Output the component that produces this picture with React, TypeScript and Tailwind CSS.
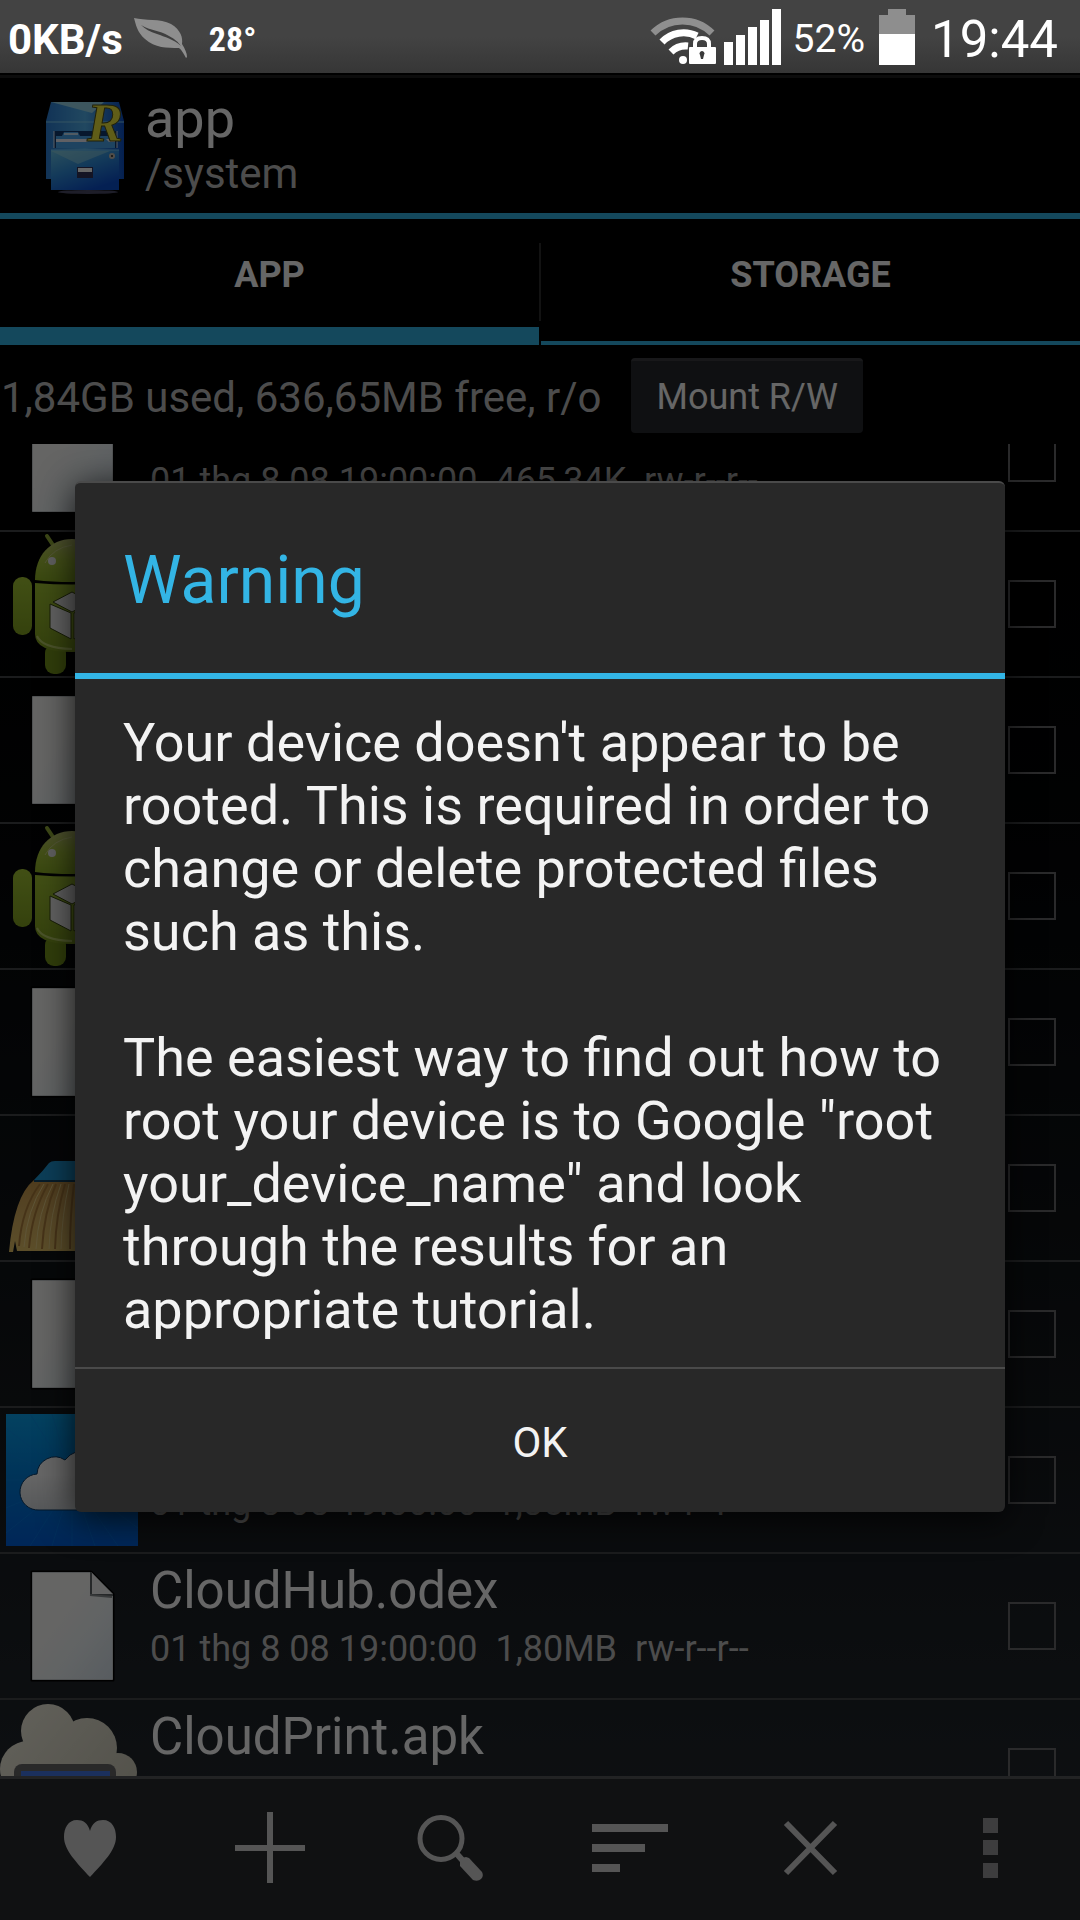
import React, { useState } from 'react';

type IconKind = 'file' | 'android' | 'broom' | 'cloudhub' | 'cloudprint';

interface FileEntry {
  name: string;
  date: string;
  size: string;
  perms: string;
  icon: IconKind;
}

const DATE = '01 thg 8 08 19:00:00';

const FILES: FileEntry[] = [
  { name: 'Chrome.odex', date: DATE, size: '465,34K', perms: 'rw-r--r--', icon: 'file' },
  { name: 'Bonjour.apk', date: DATE, size: '22,10K', perms: 'rw-r--r--', icon: 'android' },
  { name: 'Bonjour.odex', date: DATE, size: '18,42K', perms: 'rw-r--r--', icon: 'file' },
  { name: 'CertInst.apk', date: DATE, size: '96,71K', perms: 'rw-r--r--', icon: 'android' },
  { name: 'CertInst.odex', date: DATE, size: '61,08K', perms: 'rw-r--r--', icon: 'file' },
  { name: 'Cleaner.apk', date: DATE, size: '1,12MB', perms: 'rw-r--r--', icon: 'broom' },
  { name: 'Cleaner.odex', date: DATE, size: '1,02MB', perms: 'rw-r--r--', icon: 'file' },
  { name: 'CloudHub.apk', date: DATE, size: '1,85MB', perms: 'rw-r--r--', icon: 'cloudhub' },
  { name: 'CloudHub.odex', date: DATE, size: '1,80MB', perms: 'rw-r--r--', icon: 'file' },
  { name: 'CloudPrint.apk', date: DATE, size: '1,34MB', perms: 'rw-r--r--', icon: 'cloudprint' },
];

const FileIcon = () => (
  <svg viewBox="0 0 144 144" className="size-36 shrink-0" aria-hidden="true">
    <defs>
      <linearGradient id="paper" x1="0" y1="0" x2="1" y2="1">
        <stop offset="0.4" stopColor="#fcfcfa" />
        <stop offset="0.65" stopColor="#f2f8fa" />
        <stop offset="1" stopColor="#dbe6f0" />
      </linearGradient>
    </defs>
    <path d="M32 18 H91 L113 40 V126 H32 Z" fill="url(#paper)" stroke="#000" strokeWidth="3" strokeLinejoin="round" />
    <path d="M32.5 18.5 H91 L112.5 40 V125.5 H32.5 Z" fill="url(#paper)" stroke="#cdd2d4" strokeWidth="1" />
    <path d="M91 18 V41 H113" fill="#f4f6f6" stroke="#5f6466" strokeWidth="2" />
    <path d="M90 41 L112 43" stroke="#8b9092" strokeWidth="2" />
  </svg>
);

const AndroidIcon = () => (
  <svg viewBox="0 0 144 144" className="size-36 shrink-0" aria-hidden="true">
    <defs>
      <linearGradient id="droidHead" x1="0" y1="0" x2="0" y2="1">
        <stop offset="0" stopColor="#c6cf78" />
        <stop offset="0.5" stopColor="#a8c63c" />
        <stop offset="1" stopColor="#90b428" />
      </linearGradient>
      <linearGradient id="droidBody" x1="0" y1="0" x2="0" y2="1">
        <stop offset="0" stopColor="#a4c634" />
        <stop offset="1" stopColor="#84a422" />
      </linearGradient>
    </defs>
    <path d="M47 4 L55 16 M97 4 L89 16" stroke="#98b53a" strokeWidth="4" strokeLinecap="round" />
    <rect x="45" y="112" width="21" height="30" rx="9" fill="#7b9c1c" />
    <rect x="78" y="112" width="21" height="30" rx="9" fill="#7b9c1c" />
    <rect x="13" y="45" width="19" height="58" rx="9" fill="url(#droidBody)" />
    <rect x="112" y="45" width="19" height="58" rx="9" fill="url(#droidBody)" />
    <path d="M35 48 C35 24 50 7 72 7 C94 7 109 24 109 48 Q90 50 72 50 Q52 50 35 48 Z" fill="url(#droidHead)" />
    <path d="M45 31 Q53 16 72 13" stroke="#d3d88c" strokeWidth="1" fill="none" />
    <path d="M35 51 Q72 54 109 51 V102 Q109 120 72 120 Q35 120 35 102 Z" fill="url(#droidBody)" />
    <path d="M37 104 Q42 116 72 117" stroke="#bcd06a" strokeWidth="2" fill="none" />
    <circle cx="52" cy="29" r="4" fill="#f0f0f0" />
    <circle cx="92" cy="29" r="4" fill="#f0f0f0" />
    <path d="M53 70 L72 60 L91 70 L72 80 Z" fill="#eee" stroke="#3c4a12" strokeWidth="1" />
    <path d="M50 72 L71 81 V107 L50 96 Z" fill="#f4f4f4" stroke="#3c4a12" strokeWidth="1" />
    <path d="M94 72 L74 81 V107 L94 96 Z" fill="#ddd" stroke="#3c4a12" strokeWidth="1" />
  </svg>
);

const BroomIcon = () => (
  <svg viewBox="0 0 144 144" className="size-36 shrink-0" aria-hidden="true">
    <defs>
      <linearGradient id="straw" x1="0" y1="0" x2="0" y2="1">
        <stop offset="0" stopColor="#c8984c" />
        <stop offset="0.5" stopColor="#d8b060" />
        <stop offset="1" stopColor="#e6c468" />
      </linearGradient>
    </defs>
    <path d="M34 64 Q43 55 49 47 Q51 45 55 45 H100 L112 64 Z" fill="#209cdc" />
    <path d="M34 64 Q14 80 9 136 L13 136 L15 125 L17 135 H128 Q124 80 110 64 Z" fill="url(#straw)" />
    <g stroke="#b0813e" strokeWidth="2" fill="none">
      <path d="M40 68 Q22 92 19 130" />
      <path d="M48 68 Q32 96 29 132" />
      <path d="M56 68 Q44 96 42 133" />
      <path d="M65 68 Q56 98 55 133" />
      <path d="M74 68 Q70 98 70 133" />
    </g>
    <g stroke="#ecd48a" strokeWidth="1" fill="none">
      <path d="M44 68 Q27 94 24 131" />
      <path d="M53 68 Q38 96 36 133" />
      <path d="M61 68 Q50 98 49 133" />
      <path d="M69 68 Q62 98 61 133" />
    </g>
    <path d="M34 65 H112" stroke="#12486a" strokeWidth="2" />
  </svg>
);

const CloudHubIcon = () => (
  <svg viewBox="0 0 144 144" className="size-36 shrink-0" aria-hidden="true">
    <defs>
      <linearGradient id="hubSky" x1="0" y1="0" x2="0" y2="1">
        <stop offset="0" stopColor="#0aa4f0" />
        <stop offset="0.5" stopColor="#007edc" />
        <stop offset="1" stopColor="#0060dc" />
      </linearGradient>
      <linearGradient id="hubCloud" x1="0" y1="0" x2="0" y2="1">
        <stop offset="0.4" stopColor="#fff" />
        <stop offset="1" stopColor="#dadee2" />
      </linearGradient>
    </defs>
    <rect x="6" y="6" width="132" height="132" fill="url(#hubSky)" />
    <path
      d="M72 72 L6 20 M72 72 L6 45 M72 72 L6 72 M72 72 L6 100 M72 72 L6 125 M72 72 L30 6 M72 72 L52 6 M72 72 L72 6 M72 72 L30 138 M72 72 L52 138 M72 72 L72 138 M72 72 L95 138 M72 72 L118 138 M72 72 L138 120"
      stroke="#1088e8"
      strokeWidth="1"
      opacity="0.4"
      fill="none"
    />
    <path
      d="M39 102 A18 18 0 0 1 37 66 A18 18 0 0 1 65 52 A24 24 0 0 1 108 64 A19 19 0 0 1 106 102 Z"
      fill="url(#hubCloud)"
      stroke="#0a3a68"
      strokeWidth="1"
    />
  </svg>
);

const CloudPrintIcon = () => (
  <svg viewBox="0 0 144 144" className="size-36 shrink-0" aria-hidden="true">
    <defs>
      <linearGradient id="printCloud" gradientUnits="userSpaceOnUse" x1="20" y1="10" x2="130" y2="100">
        <stop offset="0" stopColor="#f2efdf" />
        <stop offset="1" stopColor="#cfccba" />
      </linearGradient>
    </defs>
    <g fill="url(#printCloud)">
      <circle cx="48" cy="31" r="27" />
      <circle cx="87" cy="48" r="30" />
      <circle cx="28" cy="69" r="28" />
      <circle cx="118" cy="72" r="19" />
      <rect x="28" y="40" width="82" height="60" />
    </g>
    <rect x="14" y="64" width="102" height="40" rx="8" fill="#686868" />
    <rect x="21" y="71" width="89" height="40" fill="#4478e8" />
  </svg>
);

const ICONS: Record<IconKind, React.FC> = {
  file: FileIcon,
  android: AndroidIcon,
  broom: BroomIcon,
  cloudhub: CloudHubIcon,
  cloudprint: CloudPrintIcon,
};

const StatusBar = () => (
  <div className="flex h-[73px] shrink-0 items-center justify-between bg-linear-to-b from-[#434343] from-50% to-[#363636] pr-[22px] pl-2 text-white">
    <div className="flex items-center pt-1">
      <span className="pt-0.5 text-[42px] leading-none font-bold">0KB/s</span>
      <svg viewBox="0 0 56 44" className="ml-2.5 h-11 w-14" aria-hidden="true">
        <path
          d="M1 1 C12 4 27 1 38 7 C48 13 50 21 49 27 C52 32 54 36 54 40 L53 41 C50 36 49 33 46 31 C34 31 22 31 12 22 C4 15 3 8 1 1 Z"
          fill="#8e8e8e"
        />
        <path d="M8 8 C18 14 26 13 36 19 C42 22 45 25 48 29 C40 22 32 20 24 17 C17 15 12 12 8 8 Z" fill="#3f3f3f" />
      </svg>
      <span className="ml-5 font-['Roboto_Condensed','Roboto',sans-serif] text-[34px] leading-none font-bold">28°</span>
    </div>
    <div className="flex items-center">
      <svg viewBox="0 0 66 56" className="h-14 w-[66px]" aria-hidden="true">
        <path d="M3 24 A42 42 0 0 1 62 24" fill="none" stroke="#8f8f8f" strokeWidth="7" />
        <path d="M12 33 A30 30 0 0 1 47 27" fill="none" stroke="#fff" strokeWidth="7" />
        <path d="M21 43 Q28 36 38 37" fill="none" stroke="#fff" strokeWidth="7" />
        <circle cx="33" cy="51" r="4" fill="#fff" />
        <path d="M45 38 V35 Q45 29 52 29 Q59 29 59 35 V38" fill="none" stroke="#fff" strokeWidth="4" />
        <rect x="39" y="38" width="27" height="17" rx="1" fill="#fff" />
        <path d="M50 46 A2.5 2.5 0 1 1 54 46 L53 50 H51 Z" fill="#3a3a3a" />
      </svg>
      <svg viewBox="0 0 57 56" className="ml-2 h-14 w-[57px]" fill="#fff" aria-hidden="true">
        <rect x="0" y="33" width="9" height="23" />
        <rect x="12" y="26" width="9" height="30" />
        <rect x="24" y="18" width="9" height="38" />
        <rect x="36" y="11" width="9" height="45" />
        <rect x="48" y="0" width="9" height="56" />
      </svg>
      <span className="ml-3 pt-1.5 text-[39px] leading-none">52%</span>
      <svg viewBox="0 0 36 56" className="ml-3.5 h-14 w-9" aria-hidden="true">
        <path d="M9 0 H27 V6 H36 V25 H0 V6 H9 Z" fill="#8e8e8e" />
        <rect y="25" width="36" height="31" fill="#fff" />
      </svg>
      <span className="ml-4 pt-1.5 text-[51px] leading-none">19:44</span>
    </div>
  </div>
);

const CabinetIcon = () => (
  <svg viewBox="0 0 84 96" className="mt-1.5 h-24 w-[84px]" aria-hidden="true">
    <defs>
      <linearGradient id="cabBack" x1="0" y1="0" x2="1" y2="0">
        <stop offset="0" stopColor="#2c80d8" />
        <stop offset="0.5" stopColor="#54b4f0" />
        <stop offset="1" stopColor="#0c50c8" />
      </linearGradient>
      <linearGradient id="cabFront" x1="0" y1="0" x2="0.6" y2="1">
        <stop offset="0" stopColor="#6cc8ea" />
        <stop offset="0.5" stopColor="#3090e0" />
        <stop offset="1" stopColor="#0c50d0" />
      </linearGradient>
    </defs>
    <ellipse cx="44" cy="93" rx="30" ry="2" fill="#4c4c68" />
    <path d="M7 3 H75 L80 22 H2 Z" fill="url(#cabBack)" />
    <path d="M7 3 H60 L48 14 Z" fill="#98d8ec" />
    <rect x="2" y="22" width="78" height="58" fill="url(#cabBack)" />
    <path d="M2 23 H80" stroke="#80d0f4" strokeWidth="1" />
    <path d="M10 32 H73 V49 H10 Z" fill="#123a70" />
    <path d="M10 49 V32 M73 49 V32" stroke="#e4ecfc" strokeWidth="1" />
    <path d="M12 37 H18 L20 33 H34 L36 37 H71 V49 H12 Z" fill="#4ca8f0" />
    <path d="M12 40 H46 L43 43 H12 Z M62 40 H71 V43 H65 Z" fill="#f0f0fa" />
    <path d="M20 35 H34" stroke="#c8e4f8" strokeWidth="2" />
    <rect x="7" y="51" width="68" height="40" fill="url(#cabFront)" />
    <path d="M7 52 H66 L34 65 Z" fill="#a0dce4" opacity="0.5" />
    <path d="M7 51 H75" stroke="#74c8fc" strokeWidth="1" />
    <rect x="33" y="68" width="16" height="11" fill="#34345a" />
    <rect x="34" y="69" width="14" height="4" fill="#fff" />
    <circle cx="68" cy="57" r="3" fill="#c8c0b4" />
    <circle cx="68" cy="57" r="1" fill="#222" />
    <text x="43" y="42" fontFamily="'Liberation Serif', serif" fontStyle="italic" fontWeight="700" fontSize="54" fill="#f0e83c" stroke="#50501a" strokeWidth="1">
      R
    </text>
  </svg>
);

const ActionIcon = ({ children }: { children: React.ReactNode }) => (
  <svg viewBox="0 0 96 96" className="size-24" fill="#d4d4d4" stroke="none" aria-hidden="true">
    {children}
  </svg>
);

const ACTIONS = [
  {
    label: 'Bookmarks',
    icon: <path d="M48 31 C46 23 41 20 35 20 C26 20 22 28 22 37 C22 50 35 63 48 77 C61 63 74 50 74 37 C74 28 70 20 61 20 C55 20 50 23 48 31 Z" />,
  },
  { label: 'New', icon: <path d="M45 12 H51 V45 H83 V51 H51 V83 H45 V51 H13 V45 H45 Z" /> },
  {
    label: 'Search',
    icon: (
      <>
        <circle cx="39" cy="38.5" r="21" fill="none" stroke="#d4d4d4" strokeWidth="5" />
        <path d="M54 53 L62 62" stroke="#d4d4d4" strokeWidth="6" />
        <path d="M58 61 Q58 59 60 58 L64 57 L67 58 L80 72 Q82 76 79 79 Q76 82 71 80 L58 66 Z" />
      </>
    ),
  },
  { label: 'Sort', icon: <path d="M10 24 H86 V32 H10 Z M10 44 H63 V52 H10 Z M10 64 H38 V72 H10 Z" /> },
  { label: 'Close', icon: <path d="M24 23 L73 73 M73 23 L24 73" stroke="#d4d4d4" strokeWidth="6" /> },
  { label: 'More', icon: <path d="M41 18 H56 V33 H41 Z M41 40 H56 V55 H41 Z M41 63 H56 V78 H41 Z" fill="#98989b" /> },
];

const FileRow: React.FC<{ file: FileEntry }> = ({ file }) => {
  const Icon = ICONS[file.icon];
  return (
    <li className="border-b-2 border-[#44464a]">
      <label className="flex items-center pr-6">
        <Icon />
        <span className="ml-1.5 flex flex-1 flex-col pb-3.5 whitespace-pre">
          <span className="text-[51px] leading-[60px] text-white">{file.name}</span>
          <span className="text-[36px] leading-[56px] text-[#bebebe]">
            {file.date}  {file.size}  {file.perms}
          </span>
        </span>
        <input type="checkbox" className="size-12 appearance-none border-2 border-[#6a6a6c] checked:bg-[#33b5e5]" />
      </label>
    </li>
  );
};

const App: React.FC = () => {
  const [tab, setTab] = useState('APP');
  const [open, setOpen] = useState(true);

  return (
    <div className="flex h-screen flex-col overflow-hidden bg-black font-['Roboto',sans-serif]">
      <StatusBar />

      <div className="relative flex min-h-0 flex-1 flex-col bg-linear-to-b from-black to-[#272d33]">
        <header className="flex h-[146px] shrink-0 items-center border-t-2 border-b-6 border-t-black border-b-[#33b5e5] bg-black pl-11 shadow-[inset_0_3px_0_#202020]">
          <CabinetIcon />
          <div className="ml-[17px] pt-[3px]">
            <h1 className="text-[54px] leading-[56px] text-white">app</h1>
            <p className="text-[42px] leading-[54px] text-[#bebebe]">/system</p>
          </div>
        </header>

        <nav className="flex h-[126px] shrink-0">
          {['APP', 'STORAGE'].map((name, i) => (
            <React.Fragment key={name}>
              {i > 0 && <span className="mt-6 h-[78px] w-0.5 bg-[#2e2e2e]" />}
              <button onClick={() => setTab(name)} className="flex flex-1 flex-col text-[36px] font-bold text-white">
                <span className="flex h-[108px] w-full items-center justify-center pt-1">{name}</span>
                <span className={tab === name ? 'h-[18px] w-full bg-[#33b5e5]' : 'mt-auto h-1 w-full bg-[#33b5e5]'} />
              </button>
            </React.Fragment>
          ))}
        </nav>

        <div className="flex h-[99px] shrink-0 items-center pt-0.5">
          <p className="pt-1 pl-px text-[42px] text-[#bebebe]">1,84GB used, 636,65MB free, r/o</p>
          <button className="ml-[30px] h-[75px] rounded border-t-3 border-[#3c3e42] bg-[#26292d] px-[25px] text-[36px] text-white">
            Mount R/W
          </button>
        </div>

        <div className="min-h-0 flex-1 overflow-hidden">
          <ul className="-mt-[58px]">
            {FILES.map(file => (
              <FileRow key={file.name} file={file} />
            ))}
          </ul>
        </div>

        <footer className="flex h-36 shrink-0 items-center border-t-3 border-[#55575a] bg-[#292b2f] pb-[3px]">
          {ACTIONS.map(action => (
            <button key={action.label} aria-label={action.label} className="flex flex-1 justify-center">
              <ActionIcon>{action.icon}</ActionIcon>
            </button>
          ))}
        </footer>

        {open && (
          <div className="absolute inset-0 flex items-center bg-black/60 px-[75px]">
            <div
              role="dialog"
              aria-labelledby="warning-title"
              className="w-full rounded-md border-t-2 border-[#4a4a4a] bg-[#282828] shadow-[0_6px_36px_rgba(0,0,0,0.8)]"
            >
              <h2 id="warning-title" className="flex h-[190px] items-center px-12 pt-1 text-[66px] text-[#33b5e5]">
                Warning
              </h2>
              <div className="border-t-6 border-[#33b5e5] px-12 pt-8 pb-[26px] text-[54px] leading-[63px] text-[#f3f3f3]">
                <p>
                  Your device doesn't appear to be rooted. This is required in order to change or delete protected files such as this.
                </p>
                <p className="mt-[63px]">
                  The easiest way to find out how to root your device is to Google "root your_device_name" and look through the
                  results for an appropriate tutorial.
                </p>
              </div>
              <button onClick={() => setOpen(false)} className="h-[145px] w-full border-t-2 border-[#4a4a4a] pt-1 text-[42px] text-[#f3f3f3]">
                OK
              </button>
            </div>
          </div>
        )}
      </div>
    </div>
  );
};

export default App;
